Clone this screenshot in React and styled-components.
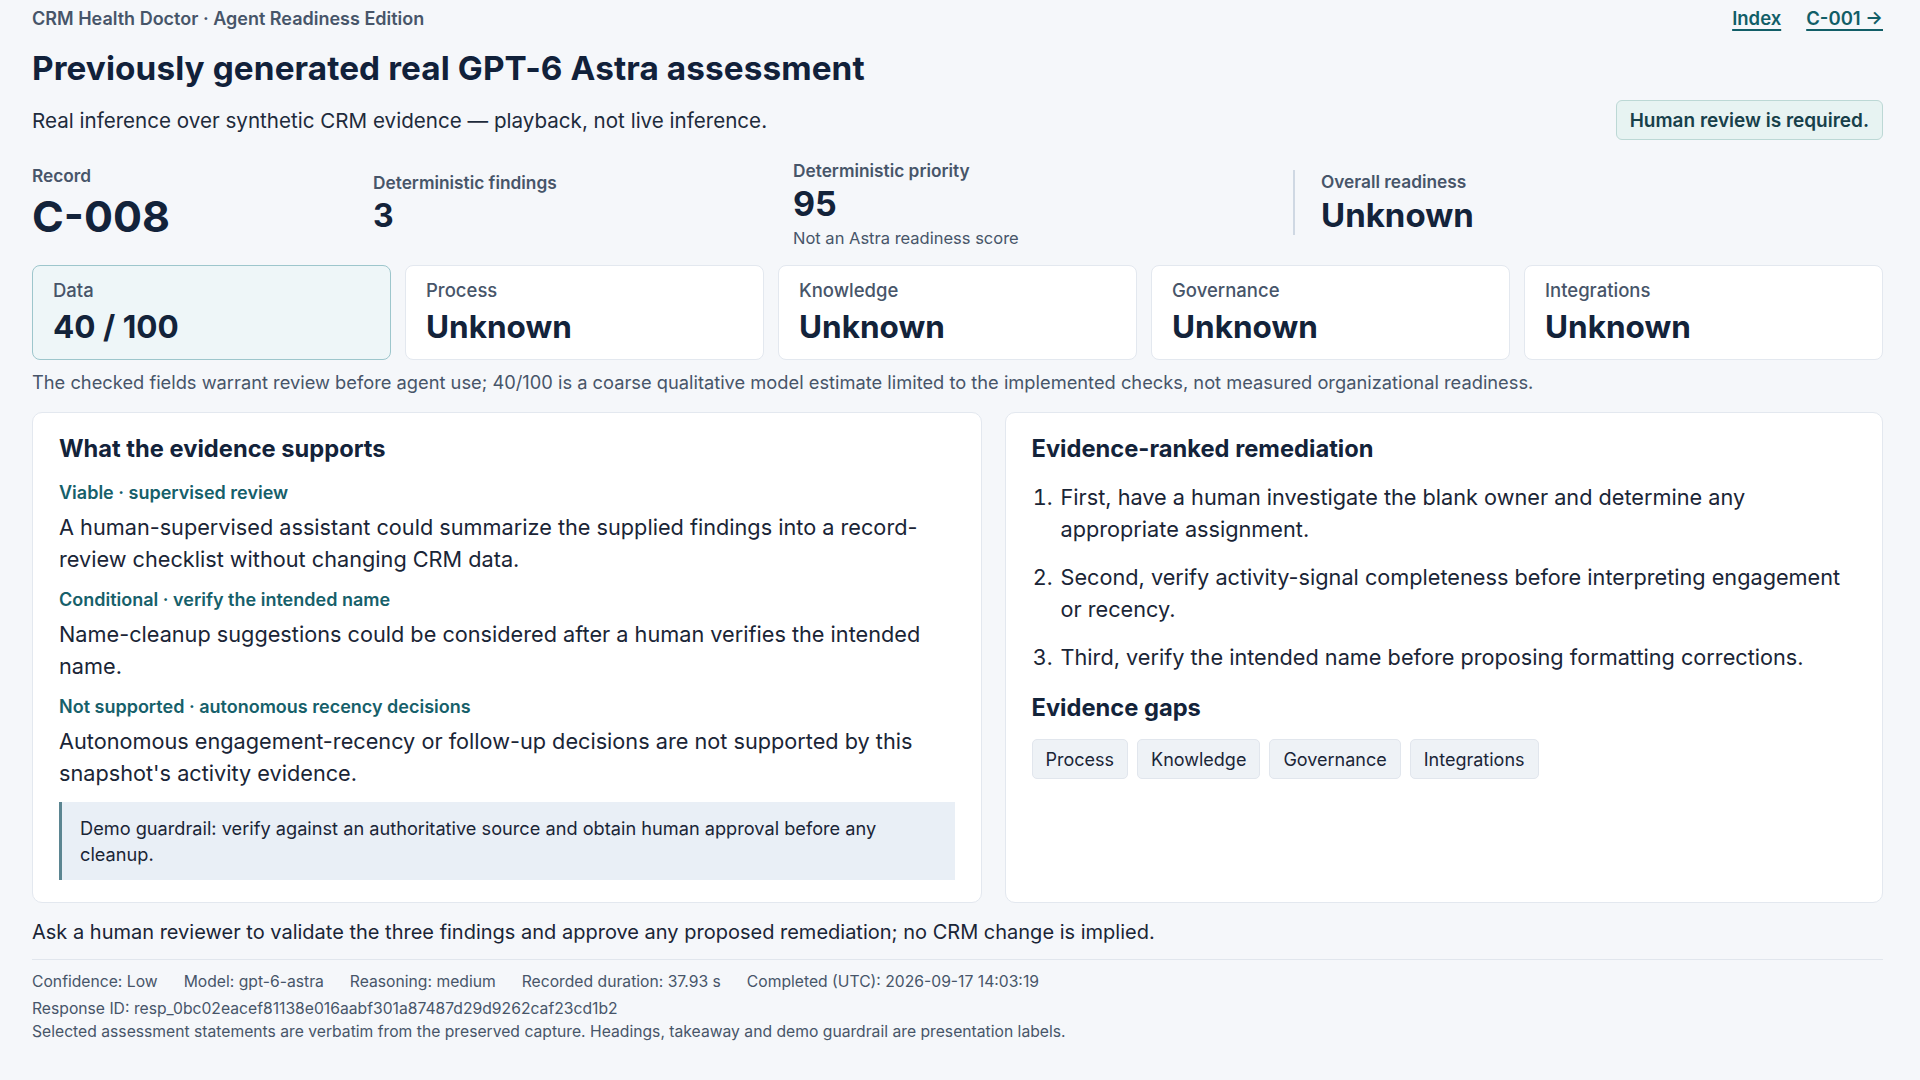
import React from "react";
import styled, { createGlobalStyle } from "styled-components";

const GlobalStyle = createGlobalStyle`
  html, body {
    margin: 0;
    padding: 0;
    background: #f5f7fa;
  }
  body {
    font-family: Inter, "Noto Sans", "Liberation Sans", sans-serif;
    color: #13233a;
  }
  * {
    box-sizing: border-box;
  }
`;

const Page = styled.div`
  padding: 6px 37px 0 32px;
  min-height: 1080px;
`;

const TopBar = styled.div`
  display: flex;
  justify-content: space-between;
  align-items: center;
  height: 24px;
  font-size: 18px;
  font-weight: 600;
  color: #475569;
`;

const Links = styled.nav`
  display: flex;
  gap: 25px;
  font-size: 18.5px;
  a {
    color: #115e67;
    text-decoration: underline;
    text-underline-offset: 4px;
    text-decoration-thickness: 2px;
  }
`;

const Title = styled.h1`
  margin: 17px 0 0;
  font-size: 33.3px;
  line-height: 43px;
  font-weight: 700;
  letter-spacing: 0.003em;
  color: #11213a;
`;

const SubRow = styled.div`
  display: flex;
  justify-content: space-between;
  align-items: center;
  margin-top: 10px;
`;

const Subtitle = styled.p`
  margin: 0;
  font-size: 20.6px;
  color: #1e2b3c;
`;

const Badge = styled.div`
  height: 40px;
  display: flex;
  align-items: center;
  padding: 0 13px;
  border: 1px solid #bcd8d5;
  border-radius: 6px;
  background: #e7f3f2;
  color: #17404a;
  font-size: 19px;
  font-weight: 600;
`;

const Stats = styled.div`
  display: grid;
  grid-template-columns: 341px 420px 500px 1fr;
  align-items: center;
  margin-top: 15px;
  height: 94px;
`;

const Stat = styled.div`
  display: flex;
  flex-direction: column;
  ${(p) =>
    p.$divided &&
    `
    border-left: 2px solid #cfd8e3;
    padding-left: 26px;
  `}
`;

const StatLabel = styled.div`
  font-size: 17.3px;
  line-height: 24px;
  font-weight: 600;
  color: #475569;
`;

const StatValue = styled.div`
  font-size: ${(p) => p.$size}px;
  line-height: 1.15;
  font-weight: 700;
  color: #13233a;
  margin-top: ${(p) => p.$gap || 0}px;
`;

const StatNote = styled.div`
  margin-top: 3px;
  font-size: 16.5px;
  line-height: 24px;
  color: #475569;
`;

const PriorityStat = styled(Stat)`
  margin-top: 4px;
`;

const Domains = styled.div`
  display: grid;
  grid-template-columns: repeat(5, 1fr);
  gap: 14px;
  margin-top: 16px;
`;

const DomainCard = styled.div`
  height: 95px;
  padding: 12px 20px;
  border-radius: 8px;
  border: 1px solid ${(p) => (p.$active ? "#9dc6cc" : "#e3e8ef")};
  background: ${(p) => (p.$active ? "#eef6f8" : "#ffffff")};
`;

const DomainLabel = styled.div`
  font-size: 18.5px;
  line-height: 24px;
  font-weight: 500;
  color: #475569;
`;

const DomainValue = styled.div`
  margin-top: 5px;
  font-size: 31.5px;
  line-height: 40px;
  font-weight: 700;
  color: #13233a;
`;

const Note = styled.p`
  margin: 9px 0 0;
  font-size: 18.3px;
  line-height: 27px;
  color: #475569;
`;

const Panels = styled.div`
  display: grid;
  grid-template-columns: 949fr 878fr;
  gap: 23px;
  margin-top: 16px;
`;

const Panel = styled.section`
  background: #ffffff;
  border: 1px solid #e3e8ef;
  border-radius: 10px;
  padding: 21px 26px 20px;
  min-height: 491px;
`;

const PanelTitle = styled.h2`
  margin: ${(p) => p.$top || 0}px 0 0;
  font-size: 23.7px;
  line-height: 30px;
  font-weight: 700;
  color: #13233a;
`;

const Verdict = styled.div`
  margin-top: ${(p) => p.$top}px;
  font-size: 18px;
  line-height: 24px;
  font-weight: 600;
  color: #16606a;
`;

const Body = styled.p`
  margin: 6px 0 0;
  font-size: 21.7px;
  line-height: 32px;
  color: #1a2536;
`;

const Guardrail = styled.div`
  margin-top: 13px;
  padding: 13px 18px;
  background: #e9eff6;
  border-left: 3px solid #5b8591;
  font-size: 18.2px;
  line-height: 26px;
  color: #1a2536;
`;

const Steps = styled.ol`
  margin: 17px 0 0;
  padding-left: 27px;
  li {
    font-size: 21.7px;
    line-height: 32px;
    color: #1a2536;
    padding-left: 2px;
  }
  li + li {
    margin-top: 16px;
  }
`;

const Chips = styled.div`
  display: flex;
  gap: 9px;
  margin-top: 16px;
`;

const Chip = styled.span`
  height: 40px;
  display: inline-flex;
  align-items: center;
  padding: 0 13px;
  background: #eef2f6;
  border: 1px solid #e1e6ed;
  border-radius: 5px;
  font-size: 18px;
  color: #1a2536;
`;

const Takeaway = styled.p`
  margin: 14px 0 0;
  font-size: 20px;
  line-height: 30px;
  color: #1a2536;
`;

const Footer = styled.footer`
  margin-top: 12px;
  border-top: 1px solid #e1e6ed;
  padding-top: 10px;
  font-size: 15.7px;
  line-height: 23px;
  color: #475569;
`;

const MetaRow = styled.div`
  display: flex;
  gap: 26px;
  margin-bottom: 4px;
`;

const domains = [
  { label: "Data", value: "40 / 100", active: true },
  { label: "Process", value: "Unknown" },
  { label: "Knowledge", value: "Unknown" },
  { label: "Governance", value: "Unknown" },
  { label: "Integrations", value: "Unknown" },
];

const findings = [
  {
    verdict: "Viable · supervised review",
    text: "A human-supervised assistant could summarize the supplied findings into a record-review checklist without changing CRM data.",
  },
  {
    verdict: "Conditional · verify the intended name",
    text: "Name-cleanup suggestions could be considered after a human verifies the intended name.",
  },
  {
    verdict: "Not supported · autonomous recency decisions",
    text: "Autonomous engagement-recency or follow-up decisions are not supported by this snapshot's activity evidence.",
  },
];

const steps = [
  "First, have a human investigate the blank owner and determine any appropriate assignment.",
  "Second, verify activity-signal completeness before interpreting engagement or recency.",
  "Third, verify the intended name before proposing formatting corrections.",
];

const gaps = ["Process", "Knowledge", "Governance", "Integrations"];

const meta = [
  "Confidence: Low",
  "Model: gpt-6-astra",
  "Reasoning: medium",
  "Recorded duration: 37.93 s",
  "Completed (UTC): 2026-09-17 14:03:19",
];

function App() {
  return (
    <>
      <GlobalStyle />
      <Page>
        <TopBar>
          <span>CRM Health Doctor · Agent Readiness Edition</span>
          <Links>
            <a href="#index">Index</a>
            <a href="#c-001">C-001 →</a>
          </Links>
        </TopBar>

        <Title>Previously generated real GPT-6 Astra assessment</Title>
        <SubRow>
          <Subtitle>
            Real inference over synthetic CRM evidence — playback, not live
            inference.
          </Subtitle>
          <Badge>Human review is required.</Badge>
        </SubRow>

        <Stats>
          <Stat>
            <StatLabel>Record</StatLabel>
            <StatValue $size={43} $gap={4}>
              C-008
            </StatValue>
          </Stat>
          <Stat>
            <StatLabel>Deterministic findings</StatLabel>
            <StatValue $size={32} $gap={3}>
              3
            </StatValue>
          </Stat>
          <PriorityStat>
            <StatLabel>Deterministic priority</StatLabel>
            <StatValue $size={34} $gap={1}>
              95
            </StatValue>
            <StatNote>Not an Astra readiness score</StatNote>
          </PriorityStat>
          <Stat $divided>
            <StatLabel>Overall readiness</StatLabel>
            <StatValue $size={33} $gap={3}>
              Unknown
            </StatValue>
          </Stat>
        </Stats>

        <Domains>
          {domains.map((d) => (
            <DomainCard key={d.label} $active={d.active}>
              <DomainLabel>{d.label}</DomainLabel>
              <DomainValue>{d.value}</DomainValue>
            </DomainCard>
          ))}
        </Domains>

        <Note>
          The checked fields warrant review before agent use; 40/100 is a coarse
          qualitative model estimate limited to the implemented checks, not
          measured organizational readiness.
        </Note>

        <Panels>
          <Panel>
            <PanelTitle>What the evidence supports</PanelTitle>
            {findings.map((f, i) => (
              <React.Fragment key={f.verdict}>
                <Verdict $top={i === 0 ? 17 : 13}>{f.verdict}</Verdict>
                <Body>{f.text}</Body>
              </React.Fragment>
            ))}
            <Guardrail>
              Demo guardrail: verify against an authoritative source and obtain
              human approval before any cleanup.
            </Guardrail>
          </Panel>

          <Panel>
            <PanelTitle>Evidence-ranked remediation</PanelTitle>
            <Steps>
              {steps.map((s) => (
                <li key={s}>{s}</li>
              ))}
            </Steps>
            <PanelTitle $top={20}>Evidence gaps</PanelTitle>
            <Chips>
              {gaps.map((g) => (
                <Chip key={g}>{g}</Chip>
              ))}
            </Chips>
          </Panel>
        </Panels>

        <Takeaway>
          Ask a human reviewer to validate the three findings and approve any
          proposed remediation; no CRM change is implied.
        </Takeaway>

        <Footer>
          <MetaRow>
            {meta.map((m) => (
              <span key={m}>{m}</span>
            ))}
          </MetaRow>
          <div>Response ID: resp_0bc02eacef81138e016aabf301a87487d29d9262caf23cd1b2</div>
          <div>
            Selected assessment statements are verbatim from the preserved
            capture. Headings, takeaway and demo guardrail are presentation
            labels.
          </div>
        </Footer>
      </Page>
    </>
  );
}

export default App;
